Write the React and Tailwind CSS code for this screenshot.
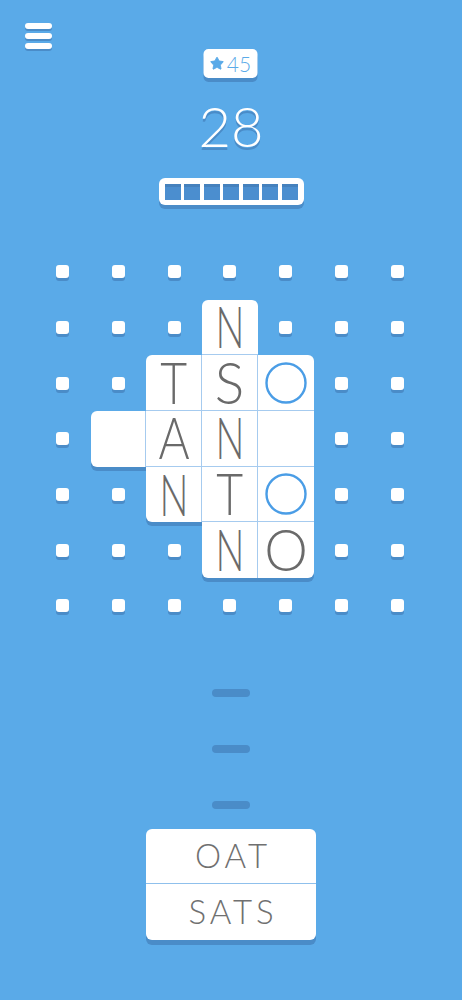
import { Star } from "lucide-react";

// tile layout: [row, col, content]  content: letter, "o" = blue ring, "" = blank
const TILES = [
  [1, 3, "N"],
  [2, 2, "T"],
  [2, 3, "S"],
  [2, 4, "o"],
  [3, 1, ""],
  [3, 2, "A"],
  [3, 3, "N"],
  [3, 4, ""],
  [4, 2, "N"],
  [4, 3, "T"],
  [4, 4, "o"],
  [5, 3, "N"],
  [5, 4, "O"],
];

// narrow the letters toward the geometric face of the game
const SQUEEZE = {
  N: "scale-x-[0.66]",
  T: "scale-x-[0.8]",
  A: "scale-x-[0.82]",
  S: "scale-x-[0.95]",
  O: "scale-x-[0.95]",
};

const tileAt = (r, c) => TILES.find((t) => t[0] === r && t[1] === c);

const Tile = ({ r, c, ch }) => {
  const up = !!tileAt(r - 1, c);
  const down = !!tileAt(r + 1, c);
  const left = !!tileAt(r, c - 1);
  const right = !!tileAt(r, c + 1);

  const cls = [
    "relative flex items-center justify-center bg-white shadow-[0_4px_0_#4a8cc8]",
    right ? "border-r border-r-[#a6cbef]" : "",
    down ? "border-b border-b-[#a6cbef]" : "",
    !up && !left ? "rounded-tl-[6px]" : "",
    !up && !right ? "rounded-tr-[6px]" : "",
    !down && !left ? "rounded-bl-[6px]" : "",
    !down && !right ? "rounded-br-[6px]" : "",
  ].join(" ");

  return (
    <div className={cls}>
      {ch === "o" ? (
        <svg width="42" height="42" viewBox="0 0 42 42">
          <circle cx="21" cy="21" r="19.5" fill="none" stroke="#4a9de6" strokeWidth="2.4" />
        </svg>
      ) : (
        <span
          className={`block text-[58px] leading-[44px] font-light text-[#6a6a6a] -translate-y-[1px] ${
            SQUEEZE[ch] || ""
          }`}
        >
          {ch}
        </span>
      )}
    </div>
  );
};

const Dot = () => (
  <div className="flex items-center justify-center">
    <div className="w-[13px] h-[13px] rounded-[3px] bg-white shadow-[0_3px_0_#4a8cc8]" />
  </div>
);

export default function App() {
  const cells = [];
  for (let r = 0; r < 7; r++) {
    for (let c = 0; c < 7; c++) {
      const t = tileAt(r, c);
      cells.push(
        t ? <Tile key={`${r}-${c}`} r={r} c={c} ch={t[2]} /> : <Dot key={`${r}-${c}`} />
      );
    }
  }

  return (
    <div className="w-[462px] h-[1000px] bg-[#5aaae8] overflow-hidden font-['Lato','Liberation_Sans',sans-serif]">
      {/* menu */}
      <div className="pt-[23px] pl-[25px]">
        <div className="flex flex-col gap-[4px] w-[27px]">
          <div className="h-[6px] rounded-[3px] bg-white shadow-[0_2px_0_#4a8cc8]" />
          <div className="h-[6px] rounded-[3px] bg-white shadow-[0_2px_0_#4a8cc8]" />
          <div className="h-[6px] rounded-[3px] bg-white shadow-[0_2px_0_#4a8cc8]" />
        </div>
      </div>

      {/* header */}
      <div className="flex flex-col items-center">
        <div className="flex items-center justify-center gap-[2px] w-[54px] h-[29px] rounded-[5px] bg-white shadow-[0_4px_0_#4a8cc8] -translate-x-[0.5px]">
          <Star size={15} className="fill-[#5aaae8] text-[#5aaae8]" strokeWidth={1.5} />
          <span className="text-[21px] leading-none font-light text-[#5aaae8]">45</span>
        </div>
        <div className="mt-[20px] text-[56px] leading-none font-light text-white [text-shadow:0_3px_0_#4a8cc8]">
          28
        </div>
        <div className="mt-[24px] flex gap-[3.5px] px-[6px] py-[5.5px] rounded-[6px] bg-white shadow-[0_4px_0_#4a8cc8]">
          {[0, 1, 2, 3, 4, 5, 6].map((i) => (
            <div
              key={i}
              className="w-[16px] h-[16px] bg-[#4b8ecf] shadow-[inset_0_3px_0_#4581bd]"
            />
          ))}
        </div>
      </div>

      {/* board */}
      <div className="mt-[39px] ml-[35px] w-[390px] grid grid-cols-7 auto-rows-[55.7px]">
        {cells}
      </div>

      {/* empty word slots */}
      <div className="mt-[55px] flex flex-col items-center gap-[48px]">
        <div className="w-[38px] h-[8px] rounded-full bg-[#4a8cc8]" />
        <div className="w-[38px] h-[8px] rounded-full bg-[#4a8cc8]" />
        <div className="w-[38px] h-[8px] rounded-full bg-[#4a8cc8]" />
      </div>

      {/* found words */}
      <div className="mt-[20px] flex justify-center">
        <div className="w-[170px] rounded-[6px] bg-white shadow-[0_5px_0_#4a8cc8] flex flex-col">
          <div className="h-[55px] flex items-center justify-center border-b border-[#8fc0ec] text-[33px] font-light text-[#707070] tracking-[4px] pl-[4px]">
            OAT
          </div>
          <div className="h-[56px] flex items-center justify-center text-[33px] font-light text-[#707070] tracking-[4px] pl-[4px]">
            SATS
          </div>
        </div>
      </div>
    </div>
  );
}
